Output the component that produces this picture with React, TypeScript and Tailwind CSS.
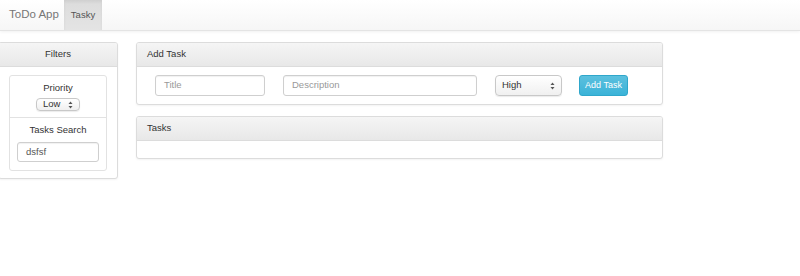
import React from "react";

const Arrows = () => (
  <svg width="5" height="8" viewBox="0 0 5 8" className="shrink-0">
    <path d="M2.5 0.5 L4.5 3 L0.5 3 Z" fill="#555" />
    <path d="M2.5 7.5 L4.5 5 L0.5 5 Z" fill="#555" />
  </svg>
);

const Select = ({ value, className }: { value: string; className: string }) => (
  <div
    className={
      "flex items-center justify-between rounded-[4px] border border-[#c8c8c8] bg-gradient-to-b from-white to-[#f0f0f0] px-[6px] text-[9.5px] text-[#333] shadow-[0_1px_1px_rgba(0,0,0,0.08)] " +
      className
    }
  >
    <span>{value}</span>
    <Arrows />
  </div>
);

const Input = ({ value, placeholder, className }: { value?: string; placeholder: string; className: string }) => (
  <div
    className={
      "flex items-center rounded-[3px] border border-[#cfcfcf] bg-white px-[8px] text-[9.5px] shadow-[inset_0_1px_1px_rgba(0,0,0,0.06)] " +
      className
    }
  >
    {value ? <span className="text-[#555]">{value}</span> : <span className="text-[#999]">{placeholder}</span>}
  </div>
);

const PanelHeading = ({ title, center }: { title: string; center?: boolean }) => (
  <div
    className={
      "flex h-[24px] items-center border-b border-[#dcdcdc] bg-gradient-to-b from-[#f5f5f5] to-[#e8e8e8] px-[10px] text-[9.5px] text-[#333] " +
      (center ? "justify-center" : "")
    }
  >
    {title}
  </div>
);

export default function App() {
  return (
    <div className="h-[276px] w-[800px] overflow-hidden bg-white font-['Liberation_Sans',Arial,sans-serif]">
      <nav className="flex h-[31px] items-stretch border-b border-[#e4e4e4] bg-gradient-to-b from-white to-[#f6f6f6] shadow-[0_1px_3px_rgba(0,0,0,0.06)]">
        <div className="flex w-[64px] items-center pl-[9px] text-[11.5px] text-[#777]">ToDo App</div>
        <div className="flex w-[38px] items-center justify-center bg-gradient-to-b from-[#dcdcdc] to-[#e4e4e4] text-[9.5px] text-[#555] shadow-[inset_0_2px_3px_rgba(0,0,0,0.06)]">
          Tasky
        </div>
      </nav>

      <div className="mt-[11px] flex items-start gap-[18px]">
        <div className="-ml-[2px] w-[120px] overflow-hidden rounded-[3px] border border-[#dcdcdc] bg-white shadow-[0_1px_2px_rgba(0,0,0,0.05)]">
          <PanelHeading title="Filters" center />
          <div className="px-[10px] pt-[8px] pb-[7px]">
            <div className="rounded-[3px] border border-[#e2e2e2]">
              <div className="flex flex-col items-center border-b border-[#e2e2e2] pt-[6px] pb-[6px]">
                <div className="text-[9.5px] leading-[12px] text-[#333]">Priority</div>
                <Select value="Low" className="mt-[4px] h-[13px] w-[44px]" />
              </div>
              <div className="flex flex-col items-center pt-[6px] pb-[8px]">
                <div className="text-[9.5px] leading-[12px] text-[#333]">Tasks Search</div>
                <Input value="dsfsf" placeholder="" className="mt-[6px] h-[20px] w-[82px]" />
              </div>
            </div>
          </div>
        </div>

        <div className="flex w-[527px] flex-col gap-[11px]">
          <div className="overflow-hidden rounded-[3px] border border-[#dcdcdc] bg-white shadow-[0_1px_2px_rgba(0,0,0,0.05)]">
            <PanelHeading title="Add Task" />
            <div className="flex items-center px-[18px] py-[8px]">
              <Input placeholder="Title" className="h-[21px] w-[110px]" />
              <Input placeholder="Description" className="ml-[18px] h-[21px] w-[194px]" />
              <Select value="High" className="ml-[18px] h-[21px] w-[67px] rounded-[3px]" />
              <div className="ml-[17px] flex h-[21px] w-[49px] items-center justify-center rounded-[3px] border border-[#2fa7cb] bg-gradient-to-b from-[#5bc0de] to-[#3ab3d8] text-[9px] text-white">
                Add Task
              </div>
            </div>
          </div>

          <div className="overflow-hidden rounded-[3px] border border-[#dcdcdc] bg-white shadow-[0_1px_2px_rgba(0,0,0,0.05)]">
            <PanelHeading title="Tasks" />
            <div className="h-[17px]" />
          </div>
        </div>
      </div>
    </div>
  );
}
